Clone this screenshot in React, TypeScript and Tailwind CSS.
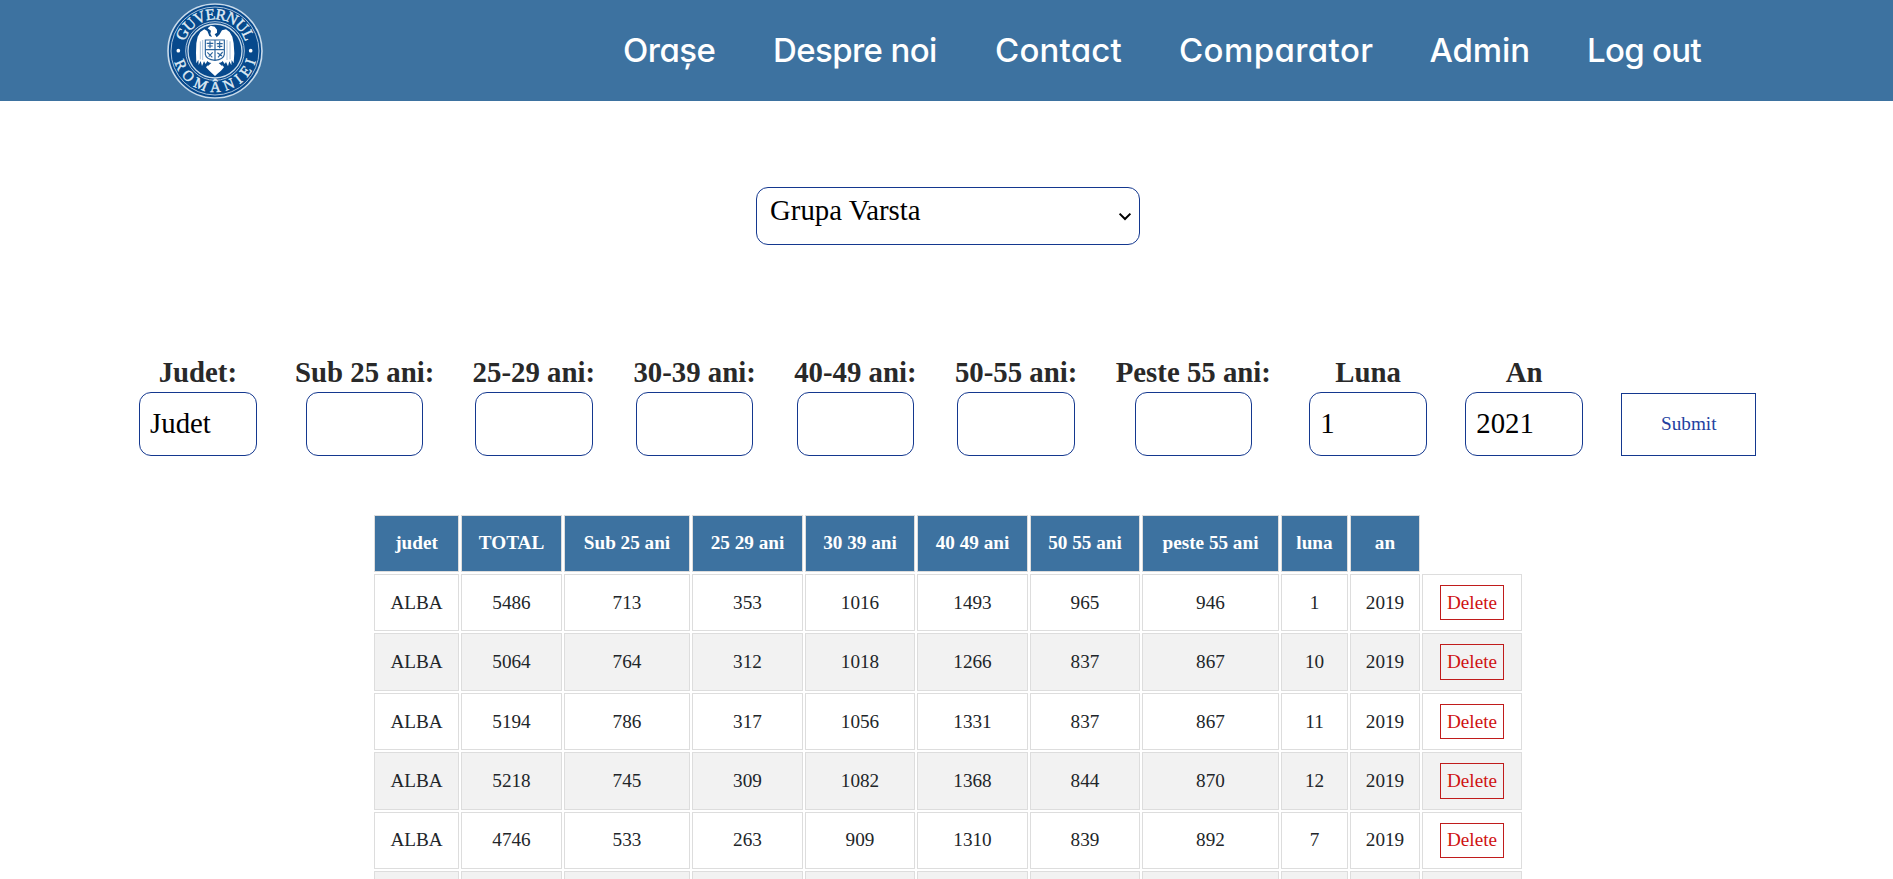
import React from "react";

const NAV = [
  { label: "Orașe", box: "ml-[623px] w-[150px]", track: "tracking-[-0.5px]" },
  { label: "Despre noi", box: "w-[222px]", track: "tracking-[-0.6px]" },
  { label: "Contact", box: "w-[184px]", track: "tracking-[0.2px]" },
  { label: "Comparator", box: "w-[250.5px]", track: "tracking-[0.4px]" },
  { label: "Admin", box: "w-[157.5px]", track: "tracking-[-0.1px]" },
  { label: "Log out", box: "w-[130px]", track: "tracking-[-0.7px]" },
];

const FIELDS = [
  { label: "Judet:", value: "Judet", col: "w-[117.6px]" },
  { label: "Sub 25 ani:", value: "", col: "w-[139.2px]" },
  { label: "25-29 ani:", value: "", col: "w-[122.4px]" },
  { label: "30-39 ani:", value: "", col: "w-[122.4px]" },
  { label: "40-49 ani:", value: "", col: "w-[122.4px]" },
  { label: "50-55 ani:", value: "", col: "w-[122.4px]" },
  { label: "Peste 55 ani:", value: "", col: "w-[155.2px]" },
  { label: "Luna", value: "1", col: "w-[117.6px]" },
  { label: "An", value: "2021", col: "w-[117.6px]" },
];

const COLUMNS = [
  "judet",
  "TOTAL",
  "Sub 25 ani",
  "25 29 ani",
  "30 39 ani",
  "40 49 ani",
  "50 55 ani",
  "peste 55 ani",
  "luna",
  "an",
];

const ROWS = [
  ["ALBA", 5486, 713, 353, 1016, 1493, 965, 946, 1, 2019],
  ["ALBA", 5064, 764, 312, 1018, 1266, 837, 867, 10, 2019],
  ["ALBA", 5194, 786, 317, 1056, 1331, 837, 867, 11, 2019],
  ["ALBA", 5218, 745, 309, 1082, 1368, 844, 870, 12, 2019],
  ["ALBA", 4746, 533, 263, 909, 1310, 839, 892, 7, 2019],
];

const GRID =
  "grid grid-cols-[85px_101px_126px_111px_110px_111px_110px_137px_67px_70px_100px] gap-x-[2px]";

function Logo() {
  return (
    <svg viewBox="37 9 288 288" className="h-24 w-24" fill="none">
      <defs>
        <path id="arc-top" d="M 86 153 A 95 95 0 0 1 276 153" />
        <path id="arc-bottom" d="M 54 149 A 127 127 0 0 0 308 149" />
      </defs>
      <circle cx="181" cy="153" r="143" fill="#07498c" />
      <circle cx="181" cy="153" r="141" stroke="#c9dbea" strokeWidth="5" />
      <circle cx="181" cy="153" r="132" stroke="#a9c3dc" strokeWidth="3" />
      <circle cx="181" cy="153" r="88" stroke="#a9c3dc" strokeWidth="3" />
      <circle cx="181" cy="153" r="81" stroke="#c9dbea" strokeWidth="4" />
      <circle cx="71" cy="152" r="5.5" fill="#fff" />
      <circle cx="288" cy="152" r="5.5" fill="#fff" />
      <g
        fill="#dfeaf4"
        stroke="#dfeaf4"
        strokeWidth="1.2"
        fontFamily="Liberation Serif, serif"
        textAnchor="middle"
      >
        <text fontSize="47">
          <textPath href="#arc-top" startOffset="50%" textLength="242">
            GUVERNUL
          </textPath>
        </text>
        <text fontSize="45">
          <textPath href="#arc-bottom" startOffset="50.5%" textLength="326">
            ROMÂNIEI
          </textPath>
        </text>
      </g>
      <path
        fill="#fff"
        d="M159 85 L168 77 L180 80 L187 89 L187 98 L180 103 L186 112 L194 104 L202 91 L214 88 L225 96 L233 110 L237 130 L239 160 L237 190 L231 180 L230 196 L224 184 L220 199 L214 186 L210 192 L204 183 L199 188 L208 202 L199 212 L190 220 L181 228 L172 220 L164 212 L154 202 L164 189 L158 183 L153 192 L148 184 L142 198 L138 183 L132 195 L131 179 L125 190 L124 158 L125 130 L129 110 L137 96 L149 88 L158 93 L164 108 L172 111 L167 101 L169 92 Z"
      />
      <path
        stroke="#2b649c"
        strokeWidth="3.5"
        d="M152 120 H209 V163 Q207 178 181 181 Q154 178 152 163 Z M181 120 V151 M152 149 H209 M181 151 V180 M156 130 H176 M159 138 H174 M166 124 V145 M186 131 H204 M188 139 H203 M195 124 V145 M158 157 L173 172 M162 170 L174 157 M188 158 L202 168 M190 172 L204 156"
      />
      <path
        stroke="#7fa5c9"
        strokeWidth="2"
        d="M137 124 V178 M144 120 V180 M217 120 V180 M226 124 V178"
      />
      <path fill="#0b4c8f" d="M157 186 L170 189 L159 199 Z M205 186 L192 189 L203 199 Z" />
    </svg>
  );
}

export default function App() {
  return (
    <div className="h-[879px] w-full overflow-hidden bg-white font-['Liberation_Serif',serif] text-[#212529]">
      <header className="flex h-[101px] items-center bg-[#3d72a0]">
        <div className="ml-[167px] -mr-[263px] w-24 shrink-0">
          <Logo />
        </div>
        <nav className="flex pb-[2px] font-['Inter',sans-serif] text-[33px] leading-[48px] font-medium whitespace-nowrap text-white [font-feature-settings:'cv11']">
          {NAV.map((item) => (
            <a key={item.label} href="#" className={`${item.box} ${item.track} shrink-0`}>
              {item.label}
            </a>
          ))}
        </nav>
      </header>

      <div className="mt-[86px] ml-[756px] flex h-[58px] w-[384px] items-start justify-between rounded-[12px] border border-[#14388f] pr-[7px] pl-[13px]">
        <span className="pt-[6px] text-[28.8px] leading-[33px] text-black">Grupa Varsta</span>
        <svg viewBox="0 0 14 10" className="mt-[24px] h-[10px] w-[14px]" fill="none">
          <path d="M1.6 1.6 L7 7 L12.4 1.6" stroke="#000" strokeWidth="2" />
        </svg>
      </div>

      <form className="mt-[111px] ml-[139.05px] flex items-end gap-[38.4px]">
        {FIELDS.map((field) => (
          <label
            key={field.label}
            className={`${field.col} flex shrink-0 flex-col items-center whitespace-nowrap`}
          >
            <span className="mb-[3px] text-[28.8px] leading-[33px] font-bold text-[#292929]">
              {field.label}
            </span>
            <input
              defaultValue={field.value}
              className="h-16 w-[117.6px] rounded-[12px] border border-[#14388f] px-[10px] pb-[2px] text-[28.8px] text-black outline-none"
            />
          </label>
        ))}
        <button
          type="button"
          className="h-[63px] w-[135px] border border-[#14388f] text-[19.2px] text-[#2340a0]"
        >
          Submit
        </button>
      </form>

      <div className="mt-[59px] ml-[374px] w-[1148px] text-center text-[19.2px]">
        <div className={`${GRID} mb-[2px] h-[57px] font-bold text-white`}>
          {COLUMNS.map((name) => (
            <div
              key={name}
              className="flex items-center justify-center border border-[#dddddd] bg-[#3d72a0] whitespace-nowrap"
            >
              {name}
            </div>
          ))}
        </div>
        {ROWS.map((row, r) => (
          <div
            key={r}
            className={`${GRID} mb-[2px] h-[57.4px] ${r % 2 ? "[&>div]:bg-[#f2f2f2]" : ""}`}
          >
            {row.map((cell, c) => (
              <div key={c} className="flex items-center justify-center border border-[#dddddd] pt-px">
                {cell}
              </div>
            ))}
            <div className="flex items-center justify-center border border-[#dddddd]">
              <button
                type="button"
                className="h-[35.4px] w-16 border border-[#c01c1c] pt-px text-[19.2px] text-[#cf1212]"
              >
                Delete
              </button>
            </div>
          </div>
        ))}
        <div className={`${GRID} h-[57.4px]`}>
          {[...COLUMNS, "actions"].map((name) => (
            <div key={name} className="border border-[#dddddd] bg-[#f2f2f2]" />
          ))}
        </div>
      </div>
    </div>
  );
}
